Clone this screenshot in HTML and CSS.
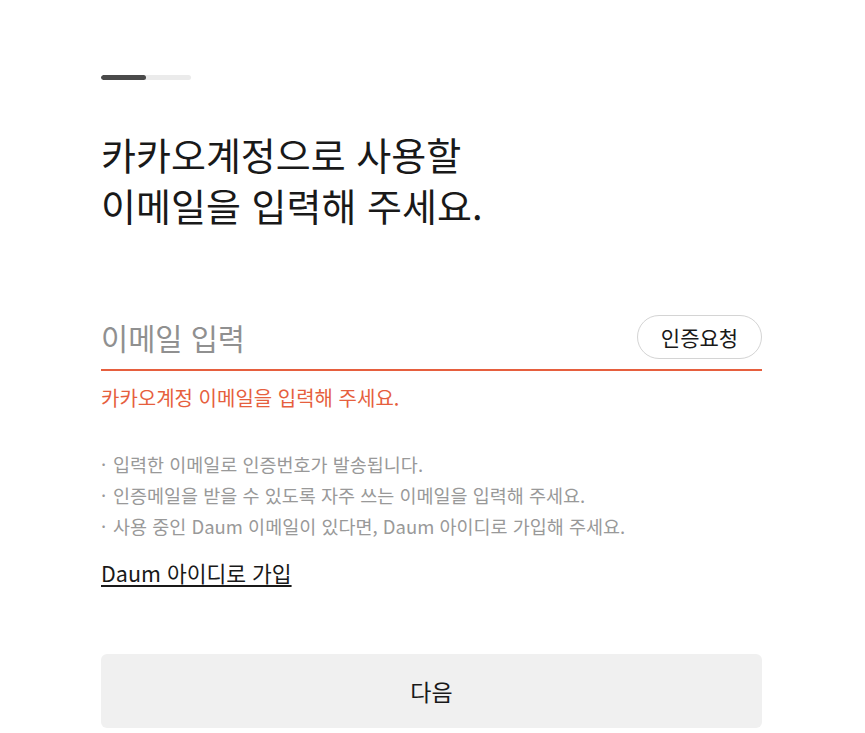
FILE: index.html
```html
<!DOCTYPE html>
<html lang="ko">
<head>
<meta charset="utf-8">
<title>카카오계정 이메일 입력</title>
<link rel="stylesheet" href="styles.css">
</head>
<body>
<main class="page">
  <div class="progress"><div class="progress-fill"></div></div>
  <h1 class="title">카카오계정으로 사용할<br>이메일을 입력해 주세요.</h1>
  <div class="field">
    <input class="field-input" type="text" placeholder="이메일 입력">
    <button class="verify-btn" type="button">인증요청</button>
  </div>
  <p class="error">카카오계정 이메일을 입력해 주세요.</p>
  <ul class="notes">
    <li>입력한 이메일로 인증번호가 발송됩니다.</li>
    <li>인증메일을 받을 수 있도록 자주 쓰는 이메일을 입력해 주세요.</li>
    <li>사용 중인 Daum 이메일이 있다면, Daum 아이디로 가입해 주세요.</li>
  </ul>
  <a class="daum-link" href="#">Daum 아이디로 가입</a>
  <button class="next-btn" type="button">다음</button>
</main>
</body>
</html>
```
FILE: styles.css
```css
* { box-sizing: border-box; }
html, body { margin: 0; padding: 0; background: #fff; }
body {
  font-family: "Noto Sans CJK KR", "Noto Sans", sans-serif;
  color: #191919;
}
.page {
  width: 661px;
  margin-left: 101px;
  padding-top: 75px;
  display: flex;
  flex-direction: column;
}
.progress {
  width: 90px;
  height: 5px;
  border-radius: 3px;
  background: #ebebeb;
  overflow: hidden;
}
.progress-fill {
  width: 45px;
  height: 100%;
  border-radius: 3px;
  background: #4a4a4a;
}
.title {
  margin: 48px 0 0;
  font-size: 38px;
  font-weight: 400;
  line-height: 51px;
}
.field {
  margin-top: 85px;
  display: flex;
  align-items: center;
  border-bottom: 2px solid #e65f3e;
  padding-bottom: 10px;
}
.field-input {
  flex: 1;
  min-width: 0;
  height: 44px;
  border: 0;
  outline: none;
  padding: 0;
  font-family: inherit;
  font-size: 29.5px;
  color: #191919;
  background: transparent;
}
.field-input::placeholder { color: #909090; }
.verify-btn {
  flex: none;
  width: 125px;
  height: 44px;
  border: 1px solid #d4d4d4;
  border-radius: 22px;
  background: #fff;
  font-family: inherit;
  font-size: 21px;
  color: #191919;
  padding: 0;
}
.error {
  margin: 13px 0 0;
  font-size: 20px;
  line-height: 28px;
  color: #e65f3e;
}
.notes {
  list-style: none;
  margin: 37px 0 0;
  padding: 0;
  font-size: 18.5px;
  line-height: 31px;
  color: #999;
}
.notes li::before {
  content: "·";
  display: inline-block;
  width: 12px;
}
.daum-link {
  align-self: flex-start;
  margin-top: 16px;
  font-size: 21.5px;
  line-height: 30px;
  color: #191919;
  text-decoration: underline;
  text-decoration-thickness: 2px;
  text-underline-offset: 3px;
}
.next-btn {
  margin-top: 66px;
  height: 74px;
  border: 0;
  border-radius: 6px;
  background: #f0f0f0;
  font-family: inherit;
  font-size: 23px;
  color: #191919;
  padding: 0;
}
```
